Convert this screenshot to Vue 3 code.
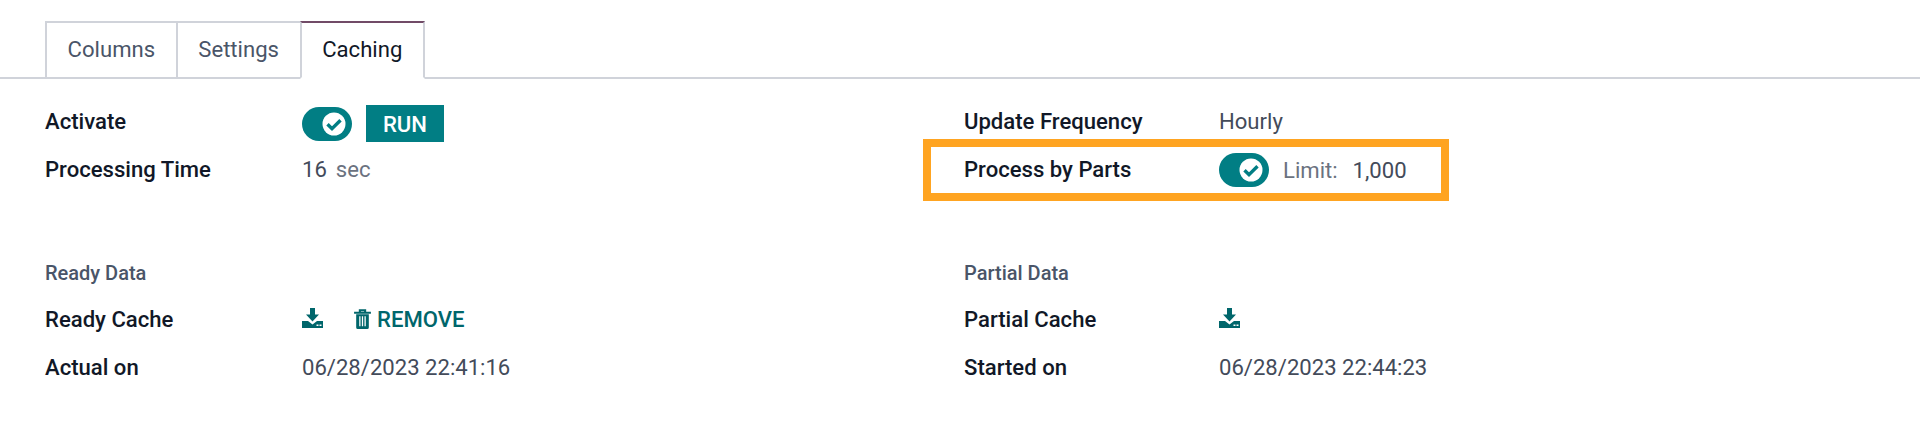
<script setup>
const tabs = [
  { name: 'Columns' },
  { name: 'Settings' },
  { name: 'Caching', active: true },
]
</script>

<template>
  <div class="page">
    <div class="tabs">
      <div v-for="tab in tabs" :key="tab.name" class="tab" :class="{ active: tab.active }">
        {{ tab.name }}
      </div>
    </div>

    <div class="content">
      <div class="group">
        <div class="row">
          <div class="label">Activate</div>
          <div class="value shifted">
            <span class="toggle">
              <svg width="24" height="24" viewBox="0 0 24 24">
                <circle cx="12" cy="12" r="11.500" fill="#fff" />
                <path d="M5.500 12.200l4.500 4.500 8.500-8.500" fill="none" stroke="#017e84" stroke-width="3.400" />
              </svg>
            </span>
            <span class="run">RUN</span>
          </div>
        </div>
        <div class="row">
          <div class="label">Processing Time</div>
          <div class="value"><span>16</span><span class="muted sec">sec</span></div>
        </div>
      </div>

      <div class="group right">
        <div class="row">
          <div class="label">Update Frequency</div>
          <div class="value">Hourly</div>
        </div>
        <div class="row marked">
          <div class="label">Process by Parts</div>
          <div class="value shifted-small">
            <span class="toggle">
              <svg width="24" height="24" viewBox="0 0 24 24">
                <circle cx="12" cy="12" r="11.500" fill="#fff" />
                <path d="M5.500 12.200l4.500 4.500 8.500-8.500" fill="none" stroke="#017e84" stroke-width="3.400" />
              </svg>
            </span>
            <span class="muted limit">Limit:</span>
            <span>1,000</span>
          </div>
        </div>
      </div>

      <div class="group lower">
        <div class="heading">Ready Data</div>
        <div class="row">
          <div class="label">Ready Cache</div>
          <div class="value">
            <svg class="download" width="21" height="20" viewBox="0 0 21 20">
              <path d="M8 0h5v6.500h4L10.500 13.500 4 6.500h4z" fill="#00666b" />
              <path d="M0 13h6l4.500 3.500 4.500-3.500h6v7H0z" fill="#00666b" />
              <rect x="14.500" y="16.500" width="2" height="1.500" fill="#fff" />
              <rect x="17.500" y="16.500" width="2" height="1.500" fill="#fff" />
            </svg>
            <span class="remove">
              <svg width="17" height="20" viewBox="0 0 16 19">
                <path d="M5.500 3V1.200h5V3M0 3.500h16" fill="none" stroke="#00666b" stroke-width="2" />
                <path d="M2 5h12v12.500a1.500 1.500 0 0 1-1.500 1.500h-9A1.500 1.500 0 0 1 2 17.500z" fill="#00666b" />
                <path d="M5.500 7v9.500M8 7v9.500M10.500 7v9.500" stroke="#fff" stroke-width="1.200" />
              </svg>
              REMOVE
            </span>
          </div>
        </div>
        <div class="row">
          <div class="label">Actual on</div>
          <div class="value">06/28/2023 22:41:16</div>
        </div>
      </div>

      <div class="group right lower">
        <div class="heading">Partial Data</div>
        <div class="row">
          <div class="label">Partial Cache</div>
          <div class="value">
            <svg class="download" width="21" height="20" viewBox="0 0 21 20">
              <path d="M8 0h5v6.500h4L10.500 13.500 4 6.500h4z" fill="#00666b" />
              <path d="M0 13h6l4.500 3.500 4.500-3.500h6v7H0z" fill="#00666b" />
              <rect x="14.500" y="16.500" width="2" height="1.500" fill="#fff" />
              <rect x="17.500" y="16.500" width="2" height="1.500" fill="#fff" />
            </svg>
          </div>
        </div>
        <div class="row">
          <div class="label">Started on</div>
          <div class="value">06/28/2023 22:44:23</div>
        </div>
      </div>
    </div>
  </div>
</template>

<style>
html,
body {
  background: #fff;
}
</style>

<style scoped>
.page {
  height: 439px;
  padding-top: 21px;
  box-sizing: border-box;
  font-family: Roboto, sans-serif;
  font-size: 22.100px;
  color: #434b5a;
  background: #fff;
  overflow: hidden;
}

.tabs {
  display: flex;
  height: 58px;
  padding-left: 45px;
  box-sizing: border-box;
  border-bottom: 2px solid #d0d3da;
}

.tab {
  height: 58px;
  padding: 0 20.600px 2px;
  box-sizing: border-box;
  display: flex;
  align-items: center;
  border: 2px solid #d0d3da;
  border-right-width: 0;
  color: #4a5568;
  background: #fff;
}

.tab.active {
  color: #111827;
  border-right-width: 2px;
  border-top-color: #714b67;
  border-bottom-color: #fff;
}

.content {
  display: grid;
  grid-template-columns: 919px 1fr;
  padding: 18px 0 0 45px;
}

.group {
  display: flex;
  flex-direction: column;
}

.lower {
  margin-top: 57px;
}

.row {
  display: grid;
  grid-template-columns: 257px 1fr;
  height: 48px;
  align-items: center;
}

.right .row {
  grid-template-columns: 255px 1fr;
}

.marked {
  position: relative;
}

.marked::after {
  content: '';
  position: absolute;
  left: -41px;
  top: -6px;
  width: 526px;
  height: 62px;
  box-sizing: border-box;
  border: 8px solid #ffa421;
}

.label {
  font-weight: 500;
  color: #111827;
}

.value {
  display: flex;
  align-items: center;
}

.shifted {
  padding-top: 5px;
}

.shifted-small {
  padding-top: 1px;
}

.heading {
  font-size: 20px;
  font-weight: 500;
  color: #4a5568;
  height: 45px;
  line-height: 46px;
}

.toggle {
  width: 50px;
  height: 34px;
  border-radius: 17px;
  background: #017e84;
  display: flex;
  align-items: center;
  justify-content: flex-end;
  padding-right: 6px;
  box-sizing: border-box;
}

.run {
  margin-left: 14px;
  width: 78px;
  height: 37px;
  background: #017e84;
  color: #fff;
  font-weight: 500;
  display: flex;
  align-items: center;
  justify-content: center;
}

.muted {
  color: #6b7280;
}

.sec {
  margin-left: 9px;
}

.limit {
  margin: 0 15px 0 14px;
}

.download {
  display: block;
  margin-top: -2px;
}

.remove {
  margin-left: 31px;
  display: flex;
  align-items: center;
  gap: 6px;
  font-weight: 500;
  color: #00666b;
}
</style>
